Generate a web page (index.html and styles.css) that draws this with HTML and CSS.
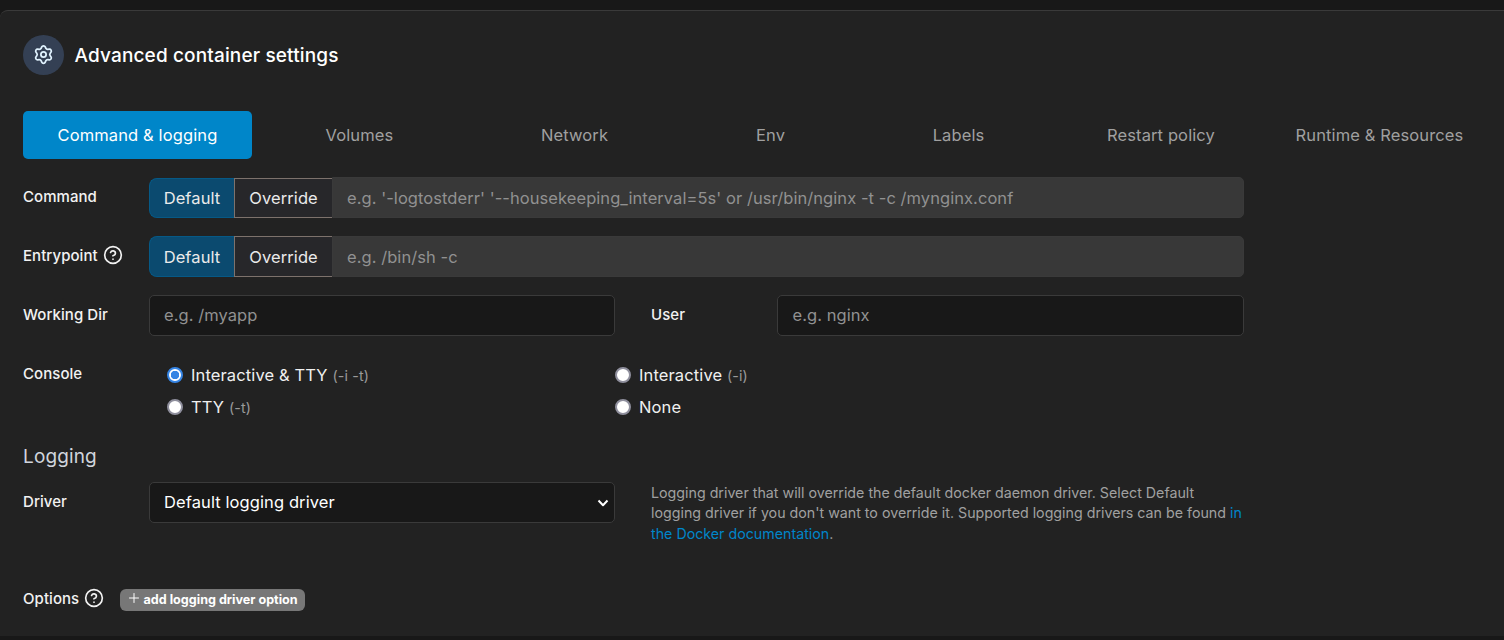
FILE: index.html
```
<!DOCTYPE html>
<html lang="en">
<head>
<meta charset="utf-8">
<title>Advanced container settings</title>
<link rel="stylesheet" href="styles.css">
</head>
<body>
<main class="panel">
  <header class="head">
    <span class="badge">
      <svg class="gear" viewBox="0 0 24 24"><path d="M9.4 19.37l.58 1.32a2.21 2.21 0 0 0 4.04 0l.58-1.32a2.43 2.43 0 0 1 2.47-1.41l1.43.15a2.21 2.21 0 0 0 2.02-3.5l-.85-1.16a2.43 2.43 0 0 1 0-2.86l.85-1.16a2.21 2.21 0 0 0-2.02-3.5l-1.43.15a2.43 2.43 0 0 1-2.47-1.42l-.58-1.32a2.21 2.21 0 0 0-4.04 0L9.4 4.66a2.43 2.43 0 0 1-2.47 1.42l-1.43-.15a2.21 2.21 0 0 0-2.02 3.5l.85 1.16a2.43 2.43 0 0 1 0 2.86l-.85 1.16a2.21 2.21 0 0 0 2.02 3.5l1.43-.15a2.43 2.43 0 0 1 2.47 1.41z"/><circle cx="12" cy="12" r="3"/></svg>
    </span>
    <h1 class="title">Advanced container settings</h1>
  </header>
  <nav class="tabs">
    <a class="tab active"><span>Command &amp; logging</span></a>
    <a class="tab"><span>Volumes</span></a>
    <a class="tab"><span>Network</span></a>
    <a class="tab"><span>Env</span></a>
    <a class="tab"><span>Labels</span></a>
    <a class="tab"><span>Restart policy</span></a>
    <a class="tab"><span>Runtime &amp; Resources</span></a>
  </nav>
  <form class="form">
    <div class="row">
      <label class="label">Command</label>
      <div class="group first">
        <span class="choice on">Default</span><span class="choice off">Override</span>
        <span class="field disabled">e.g. '-logtostderr' '--housekeeping_interval=5s' or /usr/bin/nginx -t -c /mynginx.conf</span>
      </div>
    </div>
    <div class="row">
      <label class="label">Entrypoint <svg class="help" viewBox="0 0 24 24"><circle cx="12" cy="12" r="10"/><path d="M9.09 9a3 3 0 0 1 5.83 1c0 2-3 3-3 3M12 17h.01"/></svg></label>
      <div class="group">
        <span class="choice on">Default</span><span class="choice off">Override</span>
        <span class="field disabled">e.g. /bin/sh -c</span>
      </div>
    </div>
    <div class="row">
      <label class="label">Working Dir</label>
      <span class="field half">e.g. /myapp</span>
      <label class="label user">User</label>
      <span class="field half second">e.g. nginx</span>
    </div>
    <div class="row console">
      <label class="label">Console</label>
      <div class="radios">
        <span class="option"><i class="radio checked"></i><span>Interactive &amp; TTY <small class="flag">(-i -t)</small></span></span>
        <span class="option"><i class="radio"></i><span>Interactive <small class="flag">(-i)</small></span></span>
        <span class="option"><i class="radio"></i><span>TTY <small class="flag">(-t)</small></span></span>
        <span class="option"><i class="radio"></i><span>None</span></span>
      </div>
    </div>
    <h2 class="section">Logging</h2>
    <div class="row driver">
      <label class="label">Driver</label>
      <span class="field half select">Default logging driver<svg class="chevron" viewBox="0 0 12 8"><path d="M1.5 1.5 6 6.2l4.500-4.700"/></svg></span>
      <p class="note">Logging driver that will override the default docker daemon driver. Select Default<br>logging driver if you don't want to override it. Supported logging drivers can be found <a class="link">in<br>the Docker documentation</a>.</p>
    </div>
    <div class="options">
      <label class="label auto">Options <svg class="help" viewBox="0 0 24 24"><circle cx="12" cy="12" r="10"/><path d="M9.090 9a3 3 0 0 1 5.830 1c0 2-3 3-3 3M12 17h.01"/></svg></label>
      <span class="add"><svg class="plus" viewBox="0 0 10 10"><path d="M5 .5v9M.5 5h9"/></svg><b class="addtext">add logging driver option</b></span>
    </div>
  </form>
</main>
</body>
</html>
```
FILE: styles.css
```
* { box-sizing: border-box; }
body { margin: 0; height: 640px; overflow: hidden; background: #181818; padding-top: 10px; font-family: Inter, "Liberation Sans", sans-serif; color: #fff; }
.panel { height: 626px; background: #222; border-top: 1px solid #3a3a3a; border-left: 0; border-radius: 8px 0 0 0; padding: 24px 9px 0 23px; }
.head { display: flex; align-items: center; gap: 10.6px; height: 40px; }
.badge { width: 41px; height: 40px; border-radius: 50%; background: #344054; display: flex; align-items: center; justify-content: center; }
svg { fill: none; stroke: currentColor; stroke-linecap: round; stroke-linejoin: round; flex: none; }
.gear { width: 21px; height: 21px; margin-bottom: 1px; stroke: #e0f2fe; stroke-width: 2; }
.title { margin: 0; font-size: 19px; letter-spacing: .14px; font-weight: 500; }
.tabs { display: grid; grid-template-columns: 229px 215px 215px 177px 199px 206px 1fr; margin-top: 36px; height: 48px; }
.tab { display: flex; align-items: center; justify-content: center; font-size: 16.5px; letter-spacing: .12px; color: #a0a0a0; border-radius: 5px; white-space: nowrap; }
.active { background: #0086c9; color: #fff; }
.form { display: block; width: 1221px; padding-top: 18px; }
.row { display: flex; height: 41px; margin-bottom: 18px; }
.label { width: 126px; flex: none; display: flex; gap: 5px; height: 39px; align-items: center; font-size: 15px; letter-spacing: .06px; font-weight: 500; color: #f2f2f2; }
.help { width: 20px; height: 20px; margin-bottom: 1px; stroke-width: 2; }
.group { flex: 1; display: flex; }
.choice { display: flex; align-items: center; justify-content: center; font-size: 16.5px; letter-spacing: .1px; border: 1px solid; color: #eaeaea; }
.first .choice { margin-top: 1px; padding-bottom: 1px; }
.on { width: 85px; background: #0b4a6f; border-color: #065986; border-right: 0; border-radius: 8px 0 0 8px; }
.off { width: 98px; background: #27272a; border-color: #7d726c; border-right: 0; }
.field { display: flex; align-items: center; padding: 0 0 2px 14px; font-size: 16.5px; letter-spacing: .06px; color: #919191; border: 1px solid #3a3a3a; border-radius: 5px; background: #181818; white-space: nowrap; }
.disabled { flex: 1; padding-bottom: 0; background: #383838; border-radius: 0 5px 5px 0; }
.half { width: 466px; }
.second { width: 467px; padding-left: 14.5px; }
.user { margin-left: 36px; }
.radios { display: grid; grid-template-columns: 448px 1fr; grid-auto-rows: 32px; padding-left: 18px; padding-top: 5px; }
.option { display: flex; gap: 8px; height: 32px; align-items: center; font-size: 16.5px; letter-spacing: .12px; color: #f0f0f0; }
.option > span { padding-bottom: 1px; }
.radio { width: 16px; height: 16px; border-radius: 50%; border: 2px solid #8f8f9d; background: #fff; }
.checked { border-color: #3584e4; background: radial-gradient(circle, #3584e4 0 4px, #fff 4.500px); }
.flag { font-size: 14.3px; color: #999; }
.console { height: 72px; }
.section { margin: 0; padding-top: 1px; font-size: 19px; letter-spacing: .14px; font-weight: 400; line-height: 24px; height: 24px; color: #d0d5dd; }
.driver { margin-top: 14px; }
.select { color: #fff; justify-content: space-between; padding-right: 5px; letter-spacing: .1px; }
.chevron { width: 12px; height: 8px; margin-top: 2px; stroke-width: 2; stroke-linecap: butt; }
.note { margin: 1px 0 0 36px; font-size: 14.24px; line-height: 20.400px; color: #a0a0a0; white-space: nowrap; }
.link { color: #0086c9; }
.options { display: flex; margin-top: 56px; }
.auto { width: 97px; }
.add { display: flex; gap: 4.5px; width: 185px; height: 22px; margin-top: 10px; padding: 0 7px 0 9px; border-radius: 6px; background: #777; align-items: center; }
.plus { width: 10px; height: 10px; margin-bottom: 5px; stroke-width: 1; }
.addtext { font-size: 12.600px; padding-bottom: 1px; font-weight: 700; white-space: nowrap; }
```
